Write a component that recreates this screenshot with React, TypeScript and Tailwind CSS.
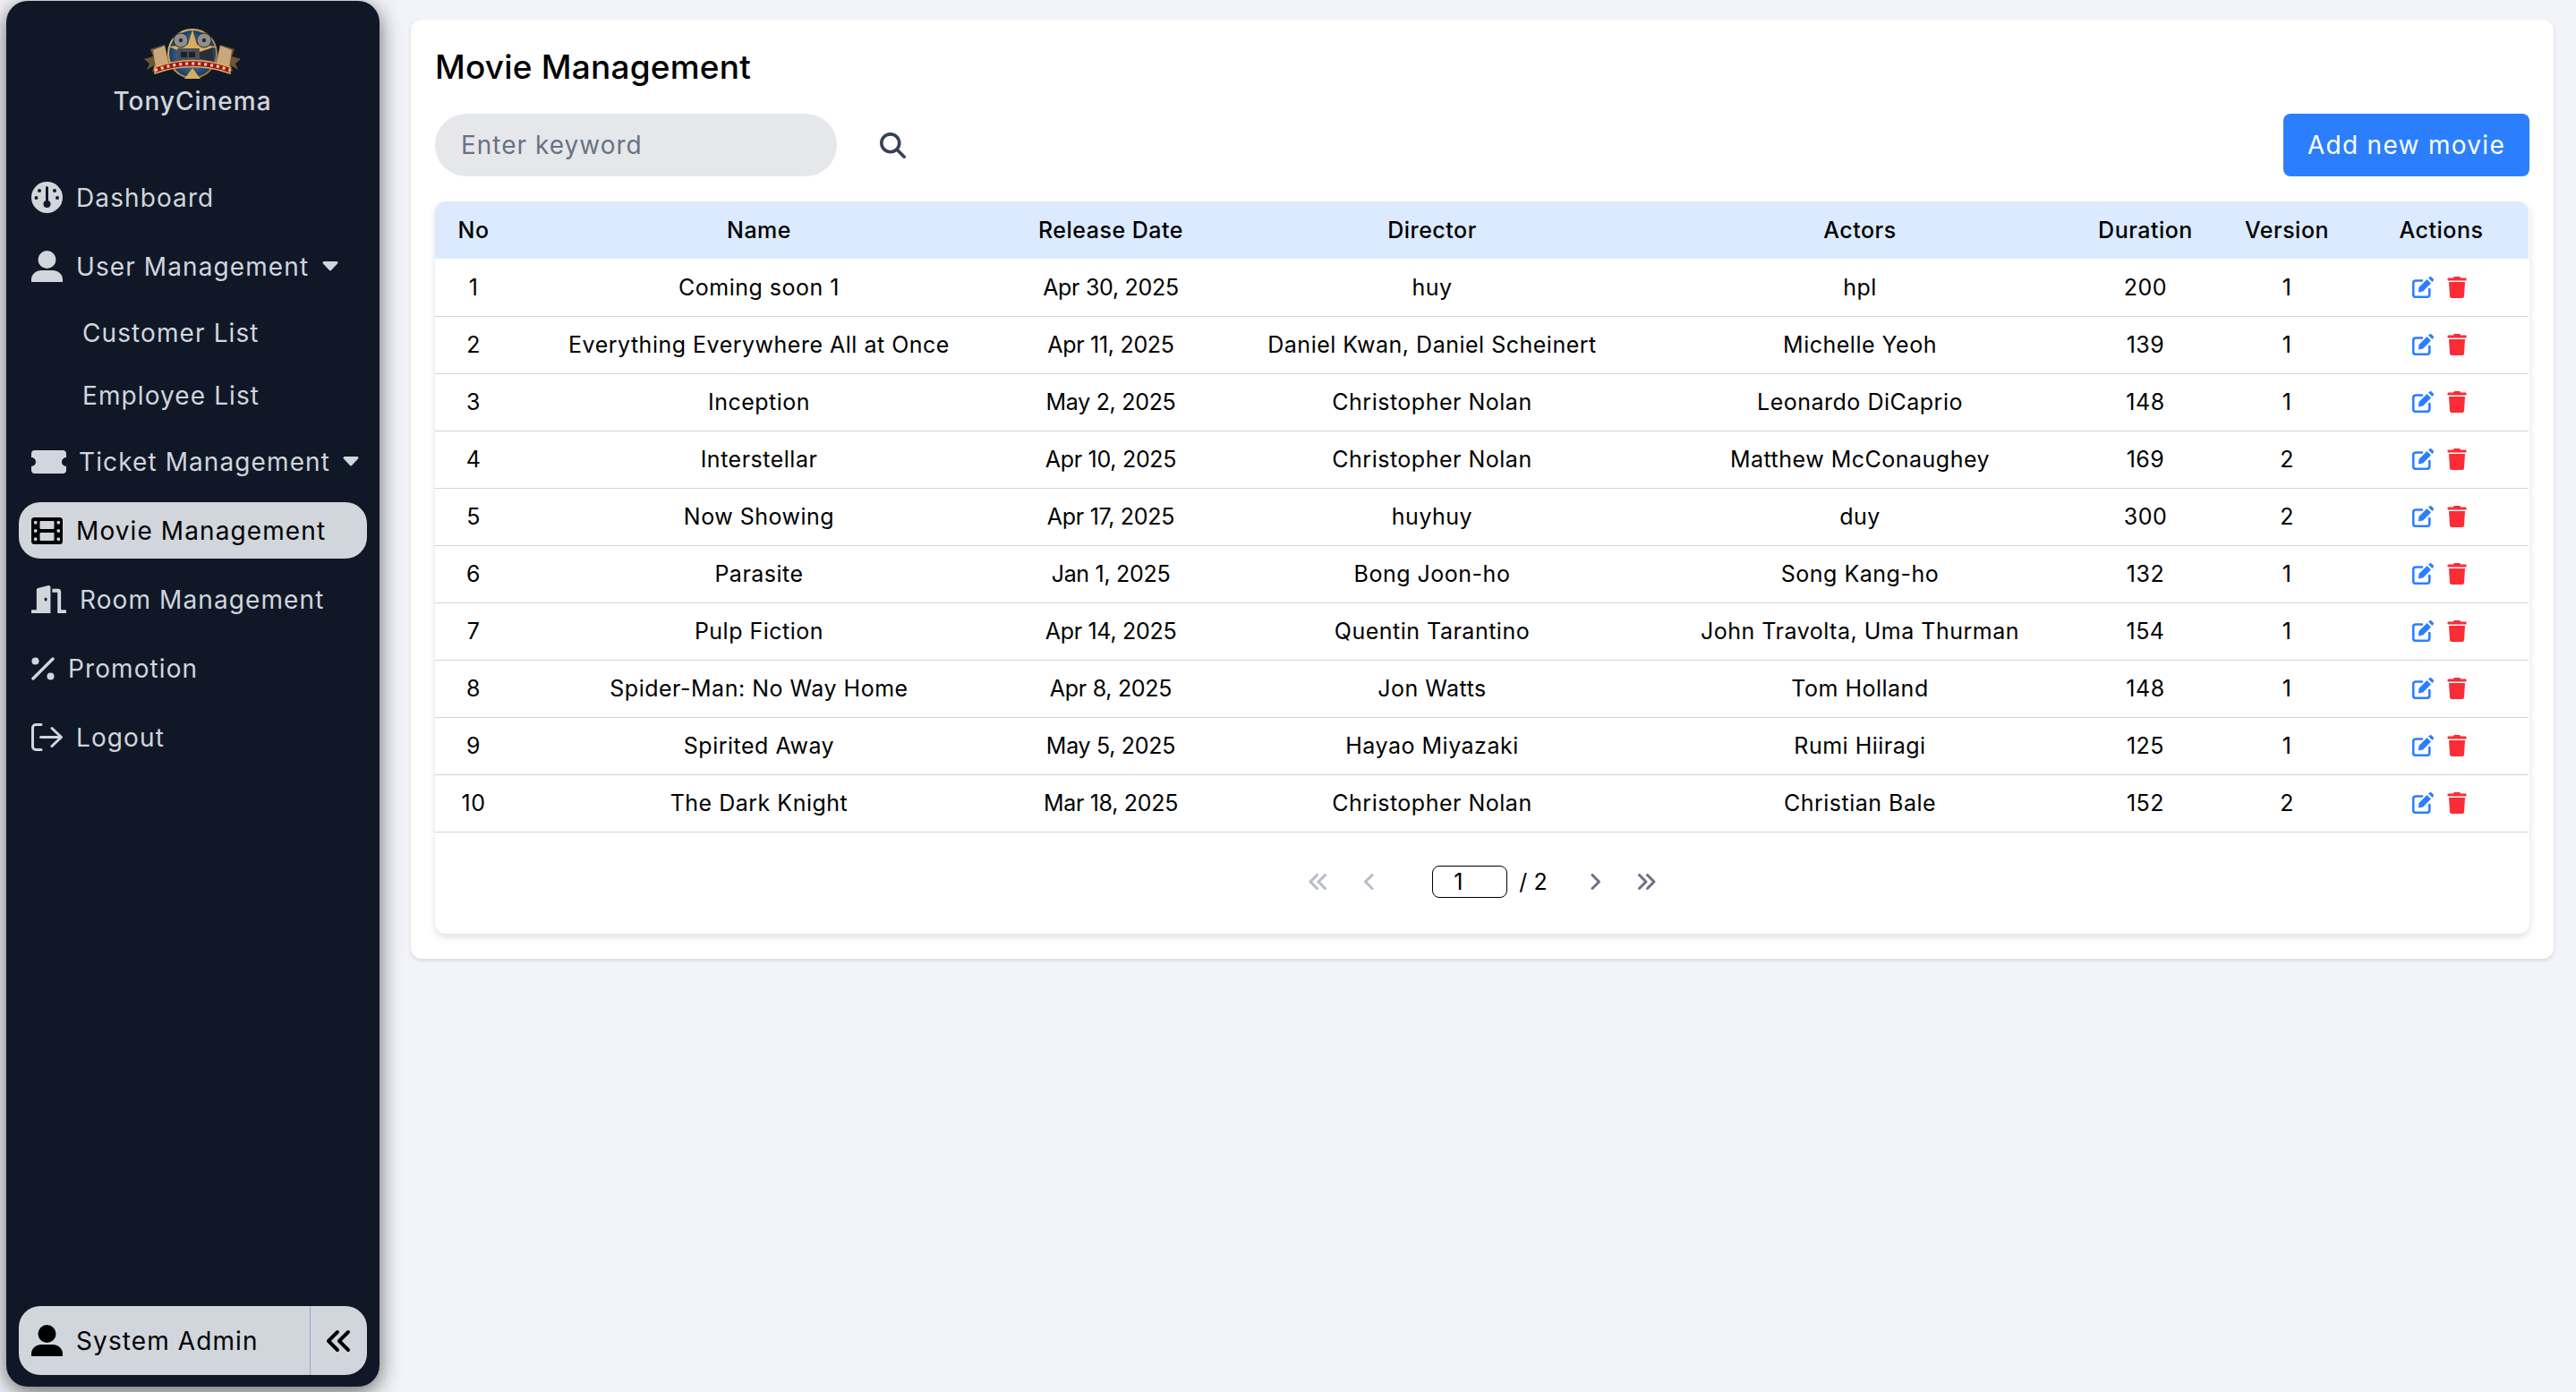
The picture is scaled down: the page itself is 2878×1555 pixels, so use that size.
import type { ReactNode } from "react";
import { FaDoorOpen, FaTrash } from "react-icons/fa";
import { FaAngleLeft, FaAngleRight, FaAnglesLeft, FaAnglesRight, FaMagnifyingGlass } from "react-icons/fa6";

const movies = [
  ["Coming soon 1", "Apr 30, 2025", "huy", "hpl", "200", "1"],
  ["Everything Everywhere All at Once", "Apr 11, 2025", "Daniel Kwan, Daniel Scheinert", "Michelle Yeoh", "139", "1"],
  ["Inception", "May 2, 2025", "Christopher Nolan", "Leonardo DiCaprio", "148", "1"],
  ["Interstellar", "Apr 10, 2025", "Christopher Nolan", "Matthew McConaughey", "169", "2"],
  ["Now Showing", "Apr 17, 2025", "huyhuy", "duy", "300", "2"],
  ["Parasite", "Jan 1, 2025", "Bong Joon-ho", "Song Kang-ho", "132", "1"],
  ["Pulp Fiction", "Apr 14, 2025", "Quentin Tarantino", "John Travolta, Uma Thurman", "154", "1"],
  ["Spider-Man: No Way Home", "Apr 8, 2025", "Jon Watts", "Tom Holland", "148", "1"],
  ["Spirited Away", "May 5, 2025", "Hayao Miyazaki", "Rumi Hiiragi", "125", "1"],
  ["The Dark Knight", "Mar 18, 2025", "Christopher Nolan", "Christian Bale", "152", "2"],
];

function Logo() {
  return (
    <svg viewBox="0 0 110 60" className="h-[60px] w-[110px]">
      <defs>
        <radialGradient id="sky" cx="50%" cy="50%" r="55%">
          <stop offset="0%" stopColor="#5f9cc8" />
          <stop offset="100%" stopColor="#0f3055" />
        </radialGradient>
        <linearGradient id="gold" x1="0" y1="0" x2="1" y2="1">
          <stop offset="0%" stopColor="#e8c27a" />
          <stop offset="100%" stopColor="#9a6b2c" />
        </linearGradient>
      </defs>
      <path d="M1 36 L11 33 L8 25 L24 20 L30 46 L10 50 L12 43 L4 48 L7 41 Z" fill="#6f5534" />
      <path d="M109 36 L99 33 L102 25 L86 20 L80 46 L100 50 L98 43 L106 48 L103 41 Z" fill="#6f5534" />
      <path d="M11 26 L24 21 L29 44 L14 46 Z" fill="#c9a77a" />
      <path d="M99 26 L86 21 L81 44 L96 46 Z" fill="#c9a77a" />
      <circle cx="55" cy="30" r="27" fill="url(#sky)" stroke="url(#gold)" strokeWidth="2" />
      <path d="M55 3 L60 20 L82 22 L62 30 L55 36 L48 30 L28 22 L50 20 Z" fill="#d9ad5c" />
      <circle cx="42" cy="15" r="8" fill="#8f8f8f" stroke="#2b2b2b" strokeWidth="1" />
      <circle cx="68" cy="15" r="8" fill="#8f8f8f" stroke="#2b2b2b" strokeWidth="1" />
      <circle cx="42" cy="15" r="2.2" fill="#2b2b2b" />
      <circle cx="68" cy="15" r="2.2" fill="#2b2b2b" />
      <rect x="38" y="24" width="25" height="16" rx="1" fill="#4a4f57" />
      <rect x="42" y="28" width="7" height="6" fill="#1d2127" />
      <rect x="51" y="28" width="7" height="6" fill="#1d2127" />
      <path d="M63 28 L78 23 L78 38 L63 36 Z" fill="#2a2d33" />
      <path d="M46 58 L55 46 L64 58 Z" fill="#d9ad5c" />
      <path d="M13 45 Q55 30 97 45 L97 52 Q55 37 13 52 Z" fill="#a3141c" stroke="#d9ad5c" strokeWidth="1.4" />
      <path d="M13 48.5 Q55 33.5 97 48.5" fill="none" stroke="#f0d9a8" strokeWidth="3" strokeDasharray="3 4" />
    </svg>
  );
}

function GaugeIcon() {
  return (
    <svg viewBox="0 0 35 35" className="h-[35px] w-[35px] shrink-0">
      <circle cx="17.5" cy="17.5" r="17.5" fill="#d1d5dc" />
      <circle cx="9" cy="10" r="2" fill="#101828" />
      <circle cx="26" cy="10" r="2" fill="#101828" />
      <circle cx="5.5" cy="18" r="2" fill="#101828" />
      <circle cx="29" cy="18" r="2" fill="#101828" />
      <rect x="16" y="5" width="3" height="18" rx="1.5" fill="#101828" />
      <circle cx="17.5" cy="25" r="4" fill="#101828" />
    </svg>
  );
}

function UserIcon({ fill }: { fill: string }) {
  return (
    <svg viewBox="0 0 35 35" className="h-[35px] w-[35px] shrink-0" fill={fill}>
      <circle cx="17.5" cy="10" r="10" />
      <path d="M0 35 V32 C0 26 6 22 11 22 H24 C29 22 35 26 35 32 V35 Z" />
    </svg>
  );
}

function TicketIcon() {
  return (
    <svg viewBox="0 0 39 26" className="h-[26px] w-[39px] shrink-0" fill="#d1d5dc">
      <path d="M4 0 H35 a4 4 0 0 1 4 4 V8 a5 5 0 0 0 0 10 v4 a4 4 0 0 1 -4 4 H4 a4 4 0 0 1 -4 -4 v-4 a5 5 0 0 0 0 -10 V4 a4 4 0 0 1 4 -4 Z" />
    </svg>
  );
}

function FilmIcon() {
  return (
    <svg viewBox="0 0 35 30" className="h-[30px] w-[35px] shrink-0">
      <rect width="35" height="30" rx="3.5" fill="#000000" />
      <g fill="#d1d5dc">
        <rect x="3" y="4" width="3.4" height="3.4" rx="1" />
        <rect x="3" y="13.3" width="3.4" height="3.4" rx="1" />
        <rect x="3" y="22.6" width="3.4" height="3.4" rx="1" />
        <rect x="28.6" y="4" width="3.4" height="3.4" rx="1" />
        <rect x="28.6" y="13.3" width="3.4" height="3.4" rx="1" />
        <rect x="28.6" y="22.6" width="3.4" height="3.4" rx="1" />
        <rect x="9.5" y="4" width="16" height="9" rx="1" />
        <rect x="9.5" y="17" width="16" height="9" rx="1" />
      </g>
    </svg>
  );
}

function PercentIcon() {
  return (
    <svg viewBox="0 0 26 26" className="h-[26px] w-[26px] shrink-0" fill="#d1d5dc">
      <circle cx="4.5" cy="4.5" r="4" />
      <circle cx="21.5" cy="21.5" r="4" />
      <path d="M24 2 L2 24" stroke="#d1d5dc" strokeWidth="3.4" strokeLinecap="round" />
    </svg>
  );
}

function LogoutIcon() {
  return (
    <svg viewBox="0 0 35 31" className="h-[31px] w-[35px] shrink-0" fill="none" stroke="#d1d5dc" strokeWidth="3" strokeLinecap="round" strokeLinejoin="round">
      <path d="M11 1.5 H5 a3.5 3.5 0 0 0 -3.5 3.5 V26 a3.5 3.5 0 0 0 3.5 3.5 H11" />
      <path d="M10.5 15.5 H33 M23 5.5 L33.5 15.5 L23 25.5" />
    </svg>
  );
}

function Caret() {
  return (
    <svg viewBox="0 0 18 11" className="h-[11px] w-[18px] shrink-0" fill="#d1d5dc">
      <path d="M2 0 H16 a1.5 1.5 0 0 1 1 2.6 L10 10 a1.5 1.5 0 0 1 -2 0 L1 2.6 A1.5 1.5 0 0 1 2 0 Z" />
    </svg>
  );
}

function EditIcon() {
  return (
    <svg viewBox="0 0 24 24" className="h-[24px] w-[24px]">
      <path d="M11 4.5 H4 a2.8 2.8 0 0 0 -2.8 2.8 V20 a2.8 2.8 0 0 0 2.8 2.8 H16.5 a2.8 2.8 0 0 0 2.8 -2.8 V14" fill="none" stroke="#2b7fff" strokeWidth="2.6" strokeLinecap="round" />
      <path d="M7.5 12 L16.5 3 L21 7.5 L12 16.5 L7 17.5 Z M18 1.6 L19.5 0.4 a1.4 1.4 0 0 1 2 0 L23.6 2.5 a1.4 1.4 0 0 1 0 2 L22.4 6 Z" fill="#2b7fff" />
    </svg>
  );
}

function NavItem({ icon, label, gap, active, caret, h }: { icon: ReactNode; label: string; gap: string; active?: boolean; caret?: boolean; h?: string }) {
  return (
    <div className={`mx-[14px] flex items-center whitespace-nowrap rounded-[24px] px-[14px] text-[28px] tracking-[1.1px] ${h ?? "h-[63px]"} ${gap} ${active ? "bg-gray-300 text-black" : "text-gray-300"}`}>
      {icon}
      <span>{label}</span>
      {caret && <Caret />}
    </div>
  );
}

function PageButton({ children, muted }: { children: ReactNode; muted?: boolean }) {
  return (
    <button className={`flex h-[36px] w-[57px] items-center justify-center text-[24px] ${muted ? "text-gray-400/70" : "text-gray-500"}`}>
      {children}
    </button>
  );
}

export default function App() {
  return (
    <div className="flex h-screen w-full overflow-hidden bg-[#f3f4f9] font-['Inter',sans-serif] text-black">
      <aside className="ml-[7px] mt-[1px] flex h-[1548px] w-[417px] shrink-0 flex-col rounded-[24px] bg-gray-900 pt-[29px] shadow-[0_6px_24px_rgba(0,0,0,0.6)]">
        <div className="flex flex-col items-center pr-[1px]">
          <Logo />
          <div className="mt-[3px] text-[28px] font-medium leading-[40px] tracking-[1px] text-gray-300">TonyCinema</div>
        </div>

        <nav className="mt-[56px] flex flex-col gap-[14px]">
          <NavItem icon={<GaugeIcon />} label="Dashboard" gap="gap-[15px]" />
          <NavItem icon={<UserIcon fill="#d1d5dc" />} label="User Management" gap="gap-[15px]" caret />
          <NavItem icon={null} label="Customer List" gap="pl-[71px]" h="h-[57px]" />
          <NavItem icon={null} label="Employee List" gap="pl-[71px]" h="h-[56px]" />
          <NavItem icon={<TicketIcon />} label="Ticket Management" gap="gap-[14px]" caret />
          <NavItem icon={<FilmIcon />} label="Movie Management" gap="gap-[15px]" active />
          <NavItem icon={<FaDoorOpen className="h-[39px] w-[39px] shrink-0" />} label="Room Management" gap="gap-[15px]" />
          <NavItem icon={<PercentIcon />} label="Promotion" gap="gap-[15px]" />
          <NavItem icon={<LogoutIcon />} label="Logout" gap="gap-[15px]" />
        </nav>

        <div className="mx-[14px] mb-[13px] mt-auto flex h-[77px] items-center rounded-[24px] bg-gray-300">
          <div className="flex flex-1 items-center gap-[15px] pl-[14px] text-[28px] tracking-[1.1px]">
            <UserIcon fill="#000000" />
            <span>System Admin</span>
          </div>
          <button className="flex h-full w-[64px] items-center justify-center border-l border-[#93a8cc]">
            <FaAnglesLeft className="h-[32px] w-[32px]" />
          </button>
        </div>
      </aside>

      <main className="ml-[35px] mt-[22px] h-[1049px] w-[2394px] shrink-0 rounded-[12px] bg-white px-[27px] pt-[28px] shadow-[0_2px_4px_rgba(0,0,0,0.12)]">
        <h1 className="text-[37px] font-medium leading-[50px] tracking-[0.2px]">Movie Management</h1>

        <div className="mt-[27px] flex h-[70px] items-center">
          <div className="flex h-[70px] w-[449px] items-center rounded-full bg-gray-200 pl-[29px] text-[28px] tracking-[1px] text-gray-500">
            Enter keyword
          </div>
          <FaMagnifyingGlass className="ml-[48px] h-[29px] w-[29px] text-gray-700" />
          <button className="ml-auto h-[70px] w-[275px] rounded-[8px] bg-blue-500 text-[28px] tracking-[1.3px] text-white">Add new movie</button>
        </div>

        <div className="mt-[28px] h-[818px] rounded-[12px] shadow-[0_4px_8px_rgba(0,0,0,0.12)]">
          <table className="w-[2339px] table-fixed border-collapse text-center text-[25px] tracking-[0.5px]">
            <colgroup>
              <col className="w-[86px]" />
              <col className="w-[552px]" />
              <col className="w-[234px]" />
              <col className="w-[484px]" />
              <col className="w-[472px]" />
              <col className="w-[166px]" />
              <col className="w-[150px]" />
              <col className="w-[195px]" />
            </colgroup>
            <thead>
              <tr className="h-[64px] bg-blue-100">
                <th className="rounded-tl-[12px] pt-[2px] font-medium">No</th>
                <th className="pt-[2px] font-medium">Name</th>
                <th className="pt-[2px] font-medium">Release Date</th>
                <th className="pt-[2px] font-medium">Director</th>
                <th className="pt-[2px] font-medium">Actors</th>
                <th className="pt-[2px] font-medium">Duration</th>
                <th className="pt-[2px] font-medium">Version</th>
                <th className="rounded-tr-[12px] pt-[2px] font-medium">Actions</th>
              </tr>
            </thead>
            <tbody>
              {movies.map((movie, index) => (
                <tr key={movie[0]} className="h-[64px] border-b border-gray-300">
                  <td className="pt-[2px]">{index + 1}</td>
                  {movie.map((cell, i) => (
                    <td key={i} className={i === 1 ? "pt-[2px] tracking-[-0.3px]" : "pt-[2px]"}>{cell}</td>
                  ))}
                  <td>
                    <div className="flex items-center justify-center gap-[14px] pr-[3px]">
                      <EditIcon />
                      <FaTrash className="h-[24px] w-[24px] text-red-500" />
                    </div>
                  </td>
                </tr>
              ))}
            </tbody>
          </table>

          <div className="flex items-center justify-center pt-[37px]">
            <PageButton muted><FaAnglesLeft /></PageButton>
            <PageButton muted><FaAngleLeft /></PageButton>
            <div className="ml-[42px] flex h-[36px] w-[84px] items-center justify-center rounded-[8px] border border-black pr-[26px] text-[25px]">1</div>
            <span className="ml-[13px] mr-[25px] text-[25px]">/ 2</span>
            <PageButton><FaAngleRight /></PageButton>
            <PageButton><FaAnglesRight /></PageButton>
          </div>
        </div>
      </main>
    </div>
  );
}
